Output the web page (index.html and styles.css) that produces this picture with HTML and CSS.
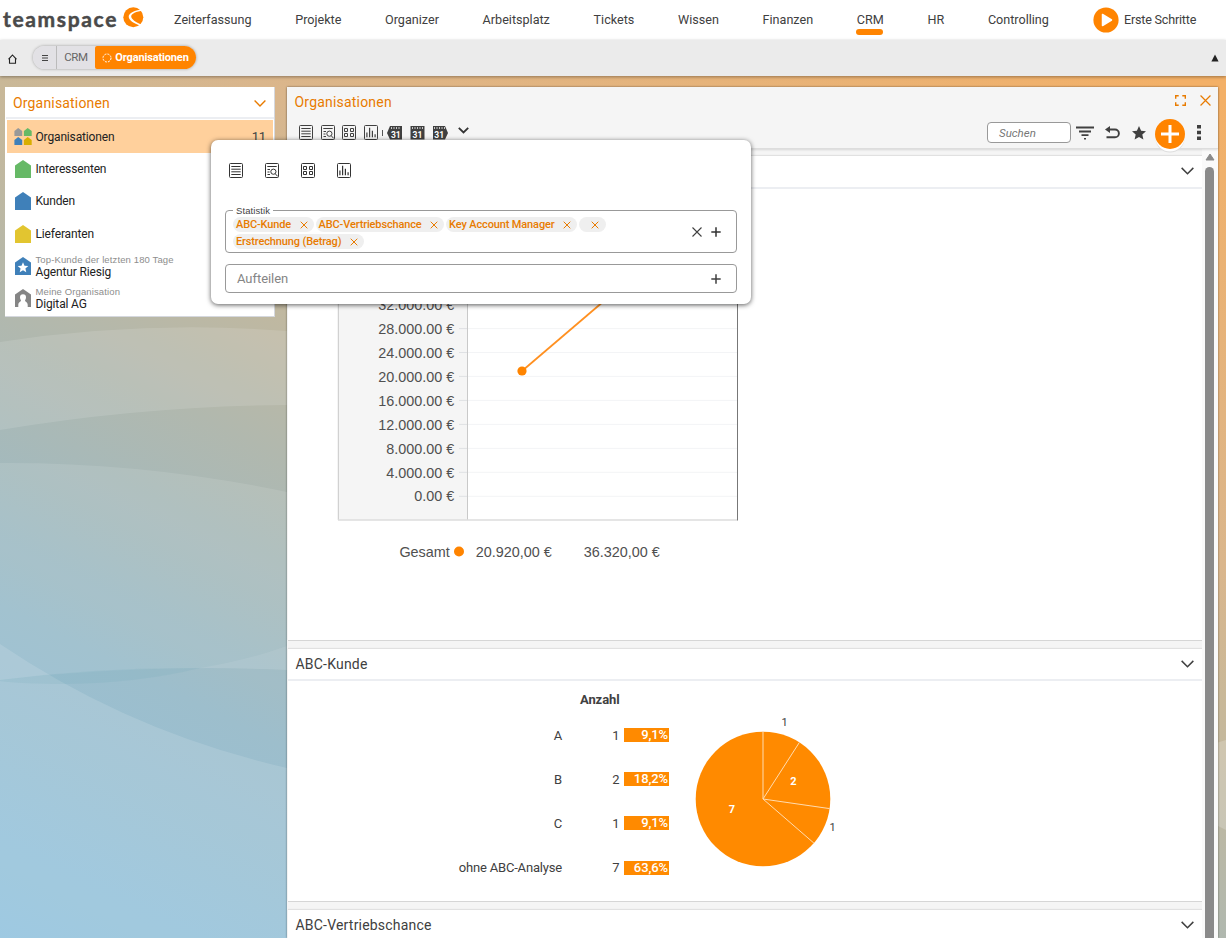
FILE: index.html
```html
<!DOCTYPE html>
<html lang="de">
<head>
<meta charset="utf-8">
<title>teamspace – Organisationen</title>
<link rel="stylesheet" href="styles.css">
</head>
<body>
<svg class="defs" width="0" height="0">
  <defs>
    <symbol id="list" viewBox="0 0 14 15"><rect x=".5" y=".5" width="13" height="14" rx="1" fill="none" stroke="currentColor"/><path d="M2.3 3.5h9.4M2.3 6.2h9.4M2.3 8.8h9.4M2.3 11.5h9.4" stroke="currentColor"/></symbol>
    <symbol id="preview" viewBox="0 0 14 15"><rect x=".5" y=".5" width="13" height="14" rx="1" fill="none" stroke="currentColor"/><path d="M2.3 3.5h9.4M2.5 6.5h2.5M2.5 9h2M2.5 11.5h2.5M10.3 10.8l2.4 2.6" stroke="currentColor" fill="none"/><circle cx="8.4" cy="8.7" r="2.6" fill="none" stroke="currentColor"/></symbol>
    <symbol id="tiles" viewBox="0 0 14 15"><rect x=".5" y=".5" width="13" height="14" rx="1" fill="none" stroke="currentColor"/><path d="M2.5 3.500h3v3h-3zM8.500 3.500h3v3h-3zM2.500 8.500h3v3h-3zM8.500 8.500h3v3h-3z" fill="none" stroke="currentColor"/></symbol>
    <symbol id="bars" viewBox="0 0 14 15"><rect x=".5" y=".5" width="13" height="14" rx="1" fill="none" stroke="currentColor"/><path d="M2.9 12.2V7.5M5.6 12.2V2.8M8.4 12.2V5.8M11.1 12.2V9.2" stroke="currentColor" stroke-width="1.2"/></symbol>
    <symbol id="down" viewBox="0 0 12 7"><path d="M.6.6 6 6 11.400.6" fill="none" stroke="currentColor" stroke-width="1.4"/></symbol>
    <symbol id="cross" viewBox="0 0 10 10"><path d="M.5.5l9 9M9.500.5l-9 9" fill="none" stroke="currentColor" stroke-width="1.1"/></symbol>
    <symbol id="cross-small" viewBox="0 0 8 8"><path d="M.7.7l6.600 6.600M7.300.7.7 7.300" fill="none" stroke="currentColor" stroke-width="1"/></symbol>
    <symbol id="plus" viewBox="0 0 10 10"><path d="M5 .3v9.400M.3 5h9.400" stroke="currentColor" stroke-width="1.500"/></symbol>
    <symbol id="house" viewBox="0 0 16 18"><path d="M8 0 16 5.500V18H0V5.500z" fill="currentColor"/></symbol>
  </defs>
</svg>

<header class="topbar">
  <div class="logo"><span class="logo-text">teamspace</span>
    <svg class="logo-mark" width="21" height="21" viewBox="0 0 21 21"><circle cx="10.300" cy="10.200" r="10" fill="#ff8400"/><path d="M20.500 2.600C12 2.500 5.500 6.500 5.700 9.800c.2 3.200 4.800 6.800 11.800 9l1.300-1.200C12.500 15.200 8.300 12.200 8.200 9.500 8.100 7 13 4.300 20.500 3.800z" fill="#fff"/></svg>
  </div>
  <nav class="nav">
    <span>Zeiterfassung</span><span>Projekte</span><span>Organizer</span><span>Arbeitsplatz</span><span>Tickets</span><span>Wissen</span><span>Finanzen</span><span class="active">CRM</span><span>HR</span><span>Controlling</span>
  </nav>
  <div class="first-steps">
    <svg width="26" height="26" viewBox="0 0 26 26"><circle cx="13" cy="13" r="12.600" fill="#ff8400"/><path d="M9.500 7.500v11l9-5.500z" fill="#fff" stroke="#fff" stroke-linejoin="round" stroke-width="1.500"/></svg>
    <span>Erste Schritte</span>
  </div>
</header>

<div class="crumbs">
  <svg class="home" width="9" height="10" viewBox="0 0 9 10"><path d="M4.500 1 8 4.800H7.500V9.300h-6V4.800H1z" fill="none" stroke="#222" stroke-width="1.100"/></svg>
  <div class="trail">
    <span class="crumb menu"><svg width="6" height="8" viewBox="0 0 6 8"><path d="M0 1.500h6M0 4h6M0 6.500h6" stroke="#444" stroke-width="1"/></svg></span>
    <span class="crumb mid">CRM</span>
    <span class="crumb current"><svg width="10" height="10" viewBox="0 0 10 10"><circle cx="5" cy="5" r="4" fill="none" stroke="#fff" stroke-width="1" stroke-dasharray="2 1.140"/></svg>Organisationen</span>
  </div>
  <svg class="up" width="8" height="8" viewBox="0 0 8 8"><path d="M4 .5 7.600 7.500H.4z" fill="#222"/></svg>
</div>

<main class="desk">
  <svg class="backdrop" width="1226" height="862" viewBox="0 76 1226 862">
    <defs><linearGradient id="sky" gradientUnits="userSpaceOnUse" x1="0" y1="938" x2="579" y2="-220">
      <stop offset="0" stop-color="#8bbfdd"/><stop offset=".23" stop-color="#98bbca"/><stop offset=".43" stop-color="#b1b8ae"/><stop offset=".59" stop-color="#c9b898"/><stop offset=".68" stop-color="#dab68c"/><stop offset="1" stop-color="#f3b067"/>
    </linearGradient></defs>
    <rect y="76" width="1226" height="862" fill="url(#sky)"/>
    <g fill="#fff">
      <path d="M0 342Q144 320 287 331V405Q144 406 0 430z" fill-opacity=".12"/>
      <path d="M0 463Q144 462 287 492V670Q144 664 0 680z" fill-opacity=".1"/>
      <path d="M0 680Q144 664 287 670V938H0z" fill-opacity=".05"/>
      <path d="M200 668Q245 661 287 646V670Q245 668 200 668z" fill-opacity=".08"/>
      <path d="M0 644Q130 732 287 768V938H0z" fill-opacity=".13"/>
      <path d="M1210 745 1226 740V830L1210 822z" fill-opacity=".2"/>
    </g>
    <path d="M0 680Q100 667 200 668Q140 683 66 684Q20 684 0 681z" fill="#6aa6b5" fill-opacity=".15"/>
  </svg>

  <aside class="side">
    <div class="side-head"><span>Organisationen</span><svg width="12" height="7"><use href="#down"/></svg></div>
    <div class="row selected">
      <svg class="ico" width="18" height="18" viewBox="0 0 18 18"><path d="M4.200 0 8.200 3V8H.4V3z" fill="#999"/><path d="M13.700 0 17.700 3V8H9.900V3z" fill="#66b966"/><path d="M4.200 9 8.200 12v5H.4v-5z" fill="#3f80b9"/><path d="M13.700 9 17.700 12v5H9.900v-5z" fill="#d8ae00"/></svg>
      <span>Organisationen</span><span class="count">11</span></div>
    <div class="row"><svg class="ico green" width="16" height="18"><use href="#house"/></svg><span>Interessenten</span></div>
    <div class="row"><svg class="ico blue" width="16" height="18"><use href="#house"/></svg><span>Kunden</span></div>
    <div class="row"><svg class="ico yellow" width="16" height="18"><use href="#house"/></svg><span>Lieferanten</span></div>
    <div class="row"><svg class="ico blue" width="16" height="18" viewBox="0 0 16 18"><path d="M8 0 16 5.500V18H0V5.500z" fill="currentColor"/><path d="M8 5.300l1.500 3.500 3.800.3-2.900 2.500.9 3.700L8 13.300l-3.300 2 .9-3.700L2.700 9.100l3.800-.3z" fill="#fff"/></svg><span class="two"><small>Top-Kunde der letzten 180 Tage</small>Agentur Riesig</span></div>
    <div class="row"><svg class="ico gray" width="16" height="18" viewBox="0 0 16 18"><path d="M8 0 16 5.500V18H0V5.500z" fill="currentColor"/><path d="M8 5.300c2 0 3 1.200 3 3 0 1.500-.5 2.300-1 3 0 1.800 2.500 1.500 2.700 4.500V18H3.300v-2.200c.2-3 2.700-2.700 2.700-4.500-.5-.7-1-1.500-1-3 0-1.800 1-3 3-3z" fill="#fff"/></svg><span class="two"><small>Meine Organisation</small>Digital AG</span></div>
  </aside>

  <section class="window">
    <div class="win-head">
      <div class="title-row"><h1>Organisationen</h1>
        <svg class="expand" width="11" height="11" viewBox="0 0 11 11" fill="none" stroke="#e87b00" stroke-width="1.400"><path d="M.7 3.700V.7h3M7.300.7h3v3M10.300 7.300v3h-3M3.700 10.300h-3v-3"/></svg>
        <svg class="close" width="11" height="11"><use href="#cross"/></svg></div>
      <div class="tools">
        <div class="views">
          <svg width="14" height="15"><use href="#list"/></svg><svg width="14" height="15"><use href="#preview"/></svg><svg width="14" height="15"><use href="#tiles"/></svg><svg width="14" height="15"><use href="#bars"/></svg>
        </div>
        <i class="sep"></i>
        <svg class="cal" width="15" height="14" viewBox="0 0 15 14"><path d="M3 0h12v13.500H3L0 7z" fill="#404040"/><path d="M4 2h10" stroke="#f5f5f5" stroke-width="1.500" stroke-dasharray="1 1.500"/><text x="8.800" y="11.500">31</text></svg>
        <svg class="cal" width="15" height="14" viewBox="0 0 15 14"><path d="M.5 0h14v13.500H.5z" fill="#404040"/><path d="M2 2h12" stroke="#f5f5f5" stroke-width="1.500" stroke-dasharray="1 1.500"/><text x="7.500" y="11.500">31</text></svg>
        <svg class="cal" width="15" height="14" viewBox="0 0 15 14"><path d="M0 0h12l3 7-3 6.500H0z" fill="#404040"/><path d="M1 2h11" stroke="#f5f5f5" stroke-width="1.500" stroke-dasharray="1 1.500"/><text x="6.200" y="11.500">31</text></svg>
        <svg class="more-views" width="11" height="7" viewBox="0 0 11 7"><path d="M.8.8 5.500 5.500 10.200.8" fill="none" stroke="#333" stroke-width="1.800"/></svg>
        <span class="search">Suchen</span>
        <svg class="filter" width="18" height="14" viewBox="0 0 18 14"><path d="M0 1.500h18M3 5.500h12M5.500 9.200h7" stroke="#404040" stroke-width="1.800"/><path d="M8 12h2v1.500H8z" fill="#404040"/></svg>
        <svg class="undo" width="15" height="13" viewBox="0 0 15 13"><path d="M4 3.500h6a3.900 3.900 0 0 1 0 7.800H1.500" fill="none" stroke="#404040" stroke-width="1.900"/><path d="M0 3.500 5 0v7z" fill="#404040"/></svg>
        <svg class="star" width="14" height="14" viewBox="0 0 14 14"><path d="M7 0l2.100 4.700 4.900.5-3.700 3.400 1.100 5L7 11.100l-4.400 2.500 1.100-5L0 5.200l4.900-.5z" fill="#404040"/></svg>
        <span class="add"><svg width="18" height="18" viewBox="0 0 18 18"><path d="M9 0v18M0 9h18" stroke="#fff" stroke-width="3"/></svg></span>
        <svg class="dots" width="4" height="15" viewBox="0 0 4 15"><path d="M0 0h4v3.500H0zM0 5.700h4v3.500H0zM0 11.400h4v3.500H0z" fill="#404040"/></svg>
      </div>
    </div>
    <div class="win-body">
      <div class="sections">
        <article class="card trend">
          <h2><span></span><svg width="13" height="8"><use href="#down"/></svg></h2>
          <svg class="chart" width="420" height="380" viewBox="330 192 420 380">
            <rect x="338" y="200" width="129" height="320" fill="#f5f5f5"/>
            <path d="M459 305h278M459 328.600h278M459 352.500h278M459 376.400h278M459 400.400h278M459 424.400h278M459 448.400h278M459 472.300h278M459 496.300h278" stroke="#f3f4f6" stroke-width="1"/>
            <path d="M459 328.600h8M459 352.500h8M459 376.400h8M459 400.400h8M459 424.400h8M459 448.400h8M459 472.300h8M459 496.300h8" stroke="#dfe1e4"/>
            <path d="M338.300 200v320M467.500 200v320" stroke="#c9c9c9"/><path d="M338 520h399" stroke="#ddd" stroke-width="1.500"/><path d="M737.500 200v320.500" stroke="#777"/>
            <path d="M522 371 652 260" stroke="#ff9020" stroke-width="1.700"/><circle cx="522" cy="371" r="4.600" fill="#ff8400"/>
            <g class="axis"><text x="454.300" y="310.300">32.000.00 €</text><text x="454.300" y="334.300">28.000.00 €</text><text x="454.300" y="357.900">24.000.00 €</text><text x="454.300" y="382">20.000.00 €</text><text x="454.300" y="405.800">16.000.00 €</text><text x="454.300" y="429.900">12.000.00 €</text><text x="454.300" y="453.500">8.000.00 €</text><text x="454.300" y="477.500">4.000.00 €</text><text x="454.300" y="501">0.00 €</text>
            <text x="449.800" y="557">Gesamt</text><text x="551.700" y="557">20.920,00 €</text><text x="659.700" y="557">36.320,00 €</text></g>
            <circle cx="459" cy="551.500" r="5" fill="#ff8400"/>
          </svg>
        </article>
        <article class="card abc">
          <h2><span>ABC-Kunde</span><svg width="13" height="8"><use href="#down"/></svg></h2>
          <div class="abc-body">
            <div class="table">
              <b class="th">Anzahl</b>
              <div class="line"><span class="lab">A</span><span class="num">1</span><span class="pct">9,1%</span></div>
              <div class="line"><span class="lab">B</span><span class="num">2</span><span class="pct">18,2%</span></div>
              <div class="line"><span class="lab">C</span><span class="num">1</span><span class="pct">9,1%</span></div>
              <div class="line"><span class="lab">ohne ABC-Analyse</span><span class="num">7</span><span class="pct">63,6%</span></div>
            </div>
            <svg class="pie" width="160" height="170" viewBox="690 706 160 170">
              <circle cx="763" cy="799" r="67.300" fill="#ff8a00"/>
              <path d="M763 799V731.700M763 799 799.400 742.400M763 799 829.600 808.600M763 799 813.900 843.100" stroke="#ffdcb0" stroke-width="1"/>
              <text x="784.500" y="725.800">1</text><text x="832.500" y="831">1</text><text class="in" x="793.500" y="785">2</text><text class="in" x="732" y="813">7</text>
            </svg>
          </div>
        </article>
        <article class="card"><h2><span>ABC-Vertriebschance</span><svg width="13" height="8"><use href="#down"/></svg></h2></article>
      </div>
      <div class="scroll"><svg width="10" height="8" viewBox="0 0 10 8"><path d="M5 1 9 7H1z" fill="#8a8a8a" stroke="#8a8a8a" stroke-linejoin="round"/></svg><i></i></div>
    </div>
  </section>

  <div class="popup">
    <div class="popup-views"><svg width="14" height="15"><use href="#list"/></svg><svg width="14" height="15"><use href="#preview"/></svg><svg width="14" height="15"><use href="#tiles"/></svg><svg width="14" height="15"><use href="#bars"/></svg></div>
    <div class="field multi"><span class="legend">Statistik</span>
      <div class="tags">
        <span class="tag">ABC-Kunde<svg width="8" height="8"><use href="#cross-small"/></svg></span><span class="tag">ABC-Vertriebschance<svg width="8" height="8"><use href="#cross-small"/></svg></span><span class="tag">Key Account Manager<svg width="8" height="8"><use href="#cross-small"/></svg></span><span class="tag empty"><svg width="8" height="8"><use href="#cross-small"/></svg></span><span class="tag">Erstrechnung (Betrag)<svg width="8" height="8"><use href="#cross-small"/></svg></span>
      </div>
      <svg width="10" height="10"><use href="#cross"/></svg><svg class="pl" width="10" height="10"><use href="#plus"/></svg>
    </div>
    <div class="field split"><span>Aufteilen</span><svg class="pl" width="10" height="10"><use href="#plus"/></svg></div>
  </div>
</main>
</body>
</html>
```
FILE: styles.css
```css
* { box-sizing: border-box; }
body { margin: 0; width: 1226px; height: 938px; overflow: hidden; font-family: Roboto, "Liberation Sans", sans-serif; font-size: 12px; color: #404040; display: flex; flex-direction: column; }
svg { flex: none; display: block; }
.defs { position: absolute; }

.topbar { height: 40px; flex: none; display: flex; align-items: center; background: #fff; white-space: nowrap; }
.logo { width: 174px; height: 40px; display: flex; align-items: flex-start; padding-left: 3px; color: #4a4a4a; }
.logo-text { font: 700 21px/24px Lato, sans-serif; width: 120px; padding-top: 7px; letter-spacing: 1.65px; -webkit-text-stroke: .5px #4a4a4a; }
.logo-mark { margin-top: 7px; }
.nav { display: flex; gap: 43.700px; font-size: 12.600px; line-height: 40px; width: 919px; }
.nav .active { position: relative; }
.nav .active::after { content: ""; position: absolute; left: -1px; top: 29px; width: 27px; height: 6px; border-radius: 3px; background: #ff8400; }
.first-steps { display: flex; align-items: center; gap: 5px; font-size: 12.600px; letter-spacing: -.21px; }
.first-steps span { margin-top: -1px; }

.crumbs { height: 36px; flex: none; display: flex; align-items: center; padding: 0 8px; background: #ebebeb; position: relative; z-index: 1; box-shadow: 0 1px 3px rgba(0,0,0,.35); }
.home { margin: 2px 0 0; }
.trail { display: flex; margin: -1px 0 0 16px; height: 23px; font-size: 11.500px; line-height: 23px; border-radius: 12px; box-shadow: 0 0 3px rgba(0,0,0,.35); }
.crumb { background: #e2e1e5; display: flex; align-items: center; justify-content: center; color: #666; }
.crumb.menu { width: 23px; border-radius: 12px 0 0 12px; }
.crumb.mid { width: 39px; border-left: 1px solid #bbb; letter-spacing: -.3px; }
.crumb.current { width: 101px; background: #ff8400; color: #fff; font-weight: 700; font-size: 11px; letter-spacing: -.15px; gap: 3px; border-radius: 2px 12px 12px 2px; }
.up { margin-left: auto; margin-right: -1px; }

.desk { flex: 1; position: relative; display: flex; align-items: flex-start; padding: 11px 0 0 5px; min-height: 0; overflow: hidden; }
.backdrop { position: absolute; left: 0; top: 0; }
.side { position: relative; width: 270px; height: 230px; background: #fff; border-right: 1px solid #d5d8de; border-bottom: 1px solid #d5d8de; padding: 0 1px 0 2px; margin-right: 12px; }
.side-head { height: 32px; margin: 0 -1px 1px; padding: 2px 8px 0 7px; display: flex; align-items: center; justify-content: space-between; font-size: 14px; letter-spacing: .17px; color: #e87b00; border-bottom: 2px solid #eceef2; }
.row { height: 32.300px; display: flex; align-items: center; padding-left: 8px; font-size: 12px; letter-spacing: -.15px; line-height: 12px; color: #222; }
.row.selected { height: 33px; background: #ffd09c; padding-left: 7px; }
.ico { margin-right: 5px; margin-left: -.5px; }
.selected .ico { margin-right: 4px; margin-left: 0; }
.selected .ico + span { margin-left: -.5px; }
.count { margin-left: auto; margin-right: 7px; color: #444; font-size: 13px; }
.green { color: #66b966; } .blue { color: #3f80b9; } .yellow { color: #e2c530; } .gray { color: #858585; }
.two { display: flex; flex-direction: column; }
.two small { font: 9.500px/12px "Liberation Sans", sans-serif; letter-spacing: .12px; color: #8d8d8d; }

.window { position: relative; width: 931px; height: 851px; background: #f5f5f5; box-shadow: 0 0 2px rgba(0,0,0,.45); display: flex; flex-direction: column; }
.win-head { height: 62px; flex: none; border-bottom: 1px solid #ddd; position: relative; box-shadow: 0 1px 2px rgba(0,0,0,.12); }
.title-row { height: 30px; display: flex; align-items: center; padding: 0 7px 0 7.500px; color: #e87b00; }
.title-row h1 { margin: 0; font-size: 14px; letter-spacing: .2px; font-weight: 400; flex: 1; }
.expand { margin-top: -4px; }
.close { margin: -4px 0 0 14px; }
.tools { display: flex; align-items: center; height: 31px; padding: 0 17px 0 12px; }
.views { display: flex; gap: 7.700px; }
.sep { width: 1px; height: 6px; background: #555; margin: 0 4px; }
.cal { margin-right: 8px; }
.cal text { font: 700 8.500px Roboto, sans-serif; fill: #fff; text-anchor: middle; }
.more-views { margin: -4px 0 0 2px; }
.search { margin-left: auto; width: 84px; height: 21px; border: 1px solid #999; border-radius: 4px; background: #fff; font: italic 11.500px/20px Roboto, sans-serif; color: #777; padding-left: 11px; margin-right: 5px; }
.filter { margin-right: 11px; margin-top: 1px; } .undo { margin-right: 12px; } .star { margin-right: 9px; }
.add { width: 30px; height: 30px; border-radius: 50%; background: #ff8400; display: flex; align-items: center; justify-content: center; box-shadow: 0 3px 0 -.5px #fff, 0 4px 0 -.5px #ddd; margin: 3px 12px 0 0; }
.dots { margin-right: 0; }

.win-body { flex: 1; display: flex; min-height: 0; }
.sections { width: 915px; padding-top: 7px; display: flex; flex-direction: column; gap: 8px; }
.card { background: #fff; flex: none; margin-left: 1px; border-bottom: 1px solid #d6d6d6; box-shadow: 0 -1px 1px rgba(0,0,0,.08); }
.card h2 { margin: 0; height: 33px; display: flex; align-items: center; justify-content: space-between; padding: 0 8px 1px 7.500px; font-size: 14px; letter-spacing: .2px; font-weight: 400; border-bottom: 2px solid #eceef2; color: #404040; }
.trend { height: 485px; }
.abc { height: 253px; }
.abc h2 { height: 32px; }
.chart { margin: 3px 0 0 42px; }
.axis text { font: 14.400px "Liberation Sans", sans-serif; fill: #505050; text-anchor: end; }
.abc-body { display: flex; }
.table { width: 402px; padding-top: 10px; font-size: 13px; }
.th { display: block; padding-left: 292px; height: 22px; line-height: 17px; letter-spacing: -.1px; }
.line { display: flex; height: 44.200px; align-items: center; }
.lab { width: 274px; text-align: right; letter-spacing: -.18px; }
.num { width: 57.500px; text-align: right; margin-right: 4.500px; }
.pct { width: 45px; height: 14px; line-height: 14px; background: #ff8a00; color: #fff; text-align: right; padding-right: 1px; font-weight: 500; letter-spacing: -.1px; }
.pie { margin-top: 25px; }
.pie text { font: 11px Roboto, sans-serif; fill: #404040; text-anchor: middle; }
.pie .in { fill: #fff; font-weight: 700; }
.scroll { width: 16px; padding: 4px 4px 0 3px; background: #fafafa; display: flex; flex-direction: column; align-items: center; }
.scroll i { width: 9px; flex: 1; margin-top: 6px; background: #8a8a8a; border-radius: 5px 5px 0 0; }

.popup { position: absolute; left: 211px; top: 64px; width: 540px; height: 164px; background: #fff; border-radius: 7px; box-shadow: 0 1px 5px rgba(0,0,0,.65); padding: 23px 14px 0; }
.popup-views { display: flex; gap: 22px; padding-left: 4px; color: #333; }
.field { border: 1px solid #999; border-radius: 4px; position: relative; display: flex; align-items: center; padding: 0 15px 0 7px; }
.multi { height: 43px; margin-top: 32px; }
.legend { position: absolute; left: 7px; top: -6px; background: #fff; padding: 0 3px; font: 9.500px/11px "Liberation Sans", sans-serif; letter-spacing: .1px; color: #444; }
.tags { display: flex; flex-wrap: wrap; gap: 2px; width: 400px; margin: 3px 60px 0 0; }
.tag { height: 15px; border-radius: 8px; background: #efefef; color: #e87b00; font-size: 11px; letter-spacing: -.14px; line-height: 15px; font-weight: 500; display: flex; align-items: center; padding: 0 6px 0 3px; gap: 8.500px; white-space: nowrap; }
.tag svg { margin-top: 1px; }
.tag.empty { padding: 0 7px 0 12px; }
.pl { margin-left: 9px; color: #333; }
.split { height: 29px; margin-top: 11px; padding-left: 11px; font-size: 13px; letter-spacing: -.05px; color: #858585; }
.split .pl { margin-left: auto; color: #404040; }
```
